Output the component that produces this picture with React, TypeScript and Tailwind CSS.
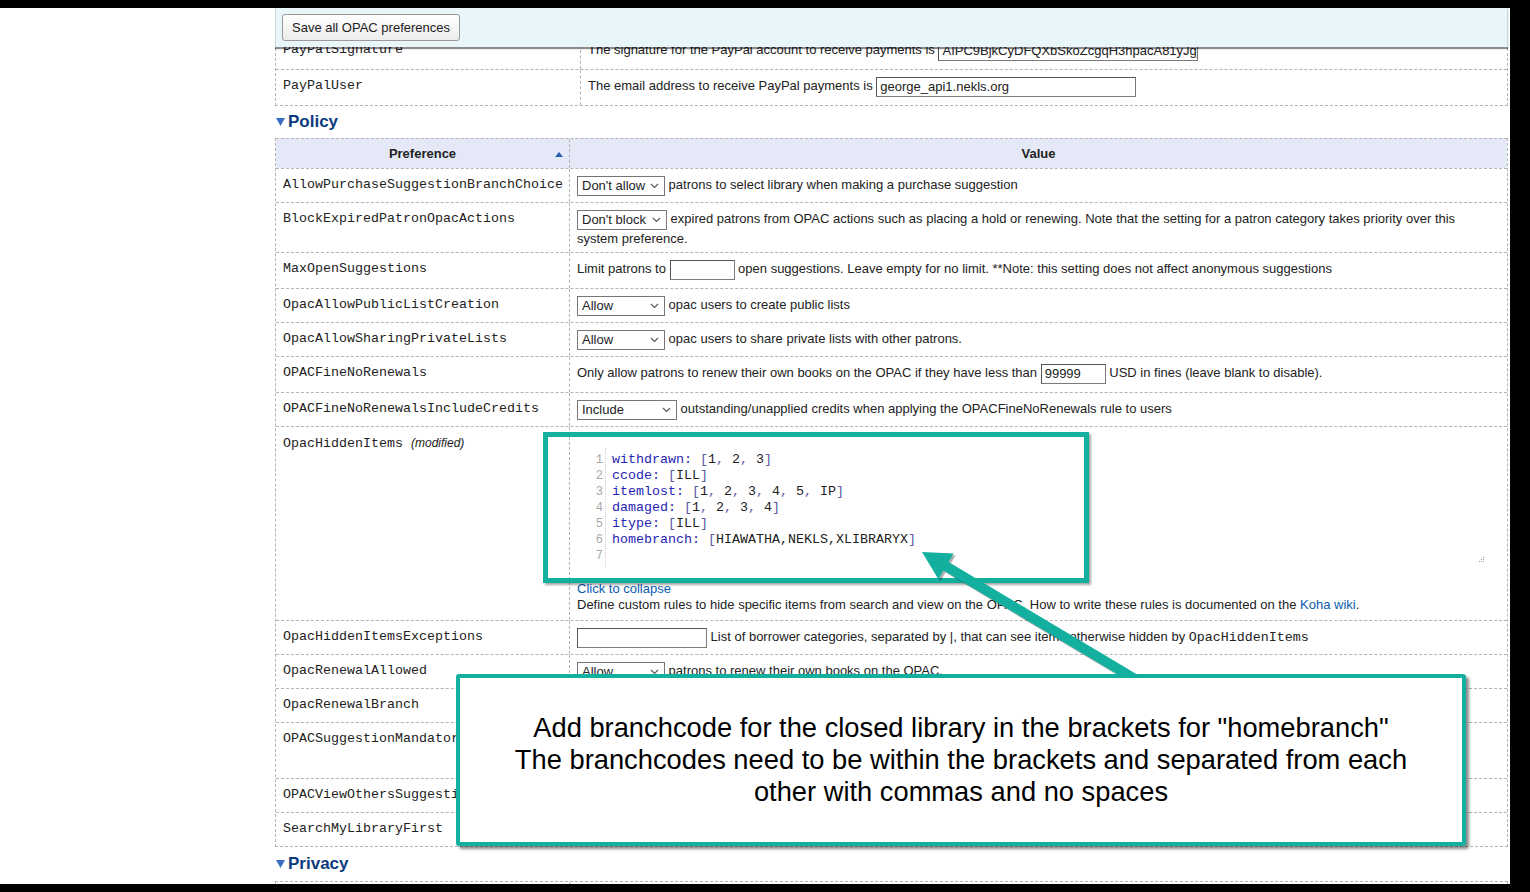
import React from 'react';

const mono = "font-['Liberation_Mono','Courier_New',monospace]";
const line = 'border-dashed border-[#b4b4b4]';

function Chevron() {
    return (
        <svg width="9" height="6" viewBox="0 0 9 6" className="shrink-0">
            <path d="M1 1l3.5 3.5L8 1" fill="none" stroke="#555" strokeWidth="1.1" />
        </svg>
    );
}

function Select({ label, w }: { label: string; w: string }) {
    return (
        <span className={`inline-flex items-center justify-between h-[20px] ${w} border border-[#767676] bg-white pl-[4px] pr-[5px] pb-[1px] align-middle text-[13px] leading-none`}>
            {label}
            <Chevron />
        </span>
    );
}

function Input({ value, w }: { value?: string; w: string }) {
    return (
        <span className={`inline-flex items-center h-[20px] ${w} border border-[#7a7a7a] border-t-[#555] border-l-[#555] bg-white px-[3px] pb-[1px] align-middle text-[13px] leading-none overflow-hidden whitespace-nowrap`}>
            {value}
        </span>
    );
}

interface RowProps {
    name: React.ReactNode;
    h: string;
    col: string;
    children?: React.ReactNode;
}

const Row: React.FC<RowProps> = ({ name, h, col, children }) => (
    <div className={`flex border-t ${line} ${h}`}>
        <div className={`${col} shrink-0 border-r ${line} pl-[7px] pt-[8px] ${mono} text-[13.33px] leading-[16px] text-[#222] whitespace-nowrap`}>
            {name}
        </div>
        <div className="flex-1 pl-[7px] pr-[8px] pt-[7px] text-[13px] leading-[18px] text-[#222]">
            {children}
        </div>
    </div>
);

function Heading({ title, h }: { title: string; h: string }) {
    return (
        <div className={`flex items-center gap-[3px] pl-[1px] ${h}`}>
            <svg width="9" height="8" viewBox="0 0 9 8">
                <path d="M0 0h9L4.5 8z" fill="#3b6fc4" />
            </svg>
            <span className="text-[17px] font-bold text-[#0b3b7e]">{title}</span>
        </div>
    );
}

const codeLines: [string, string[]][] = [
    ['withdrawn', ['1', '2', '3']],
    ['ccode', ['ILL']],
    ['itemlost', ['1', '2', '3', '4', '5', 'IP']],
    ['damaged', ['1', '2', '3', '4']],
    ['itype', ['ILL']],
];

function CodeEditor() {
    return (
        <div className={`relative mt-[13px] flex h-[119px] w-[912px] ${mono} text-[13.33px] leading-[16px]`}>
            <div className="w-[29px] shrink-0 border-r border-dotted border-[#d0d0d0] pt-[4px] pr-[2px] text-right text-[12px] text-[#a8a8a8]">
                {[1, 2, 3, 4, 5, 6, 7].map(n => (
                    <div key={n} className="h-[16px]">{n}</div>
                ))}
            </div>
            <div className="pl-[6px] pt-[4px]">
                {codeLines.map(([key, vals]) => (
                    <div key={key} className="h-[16px] whitespace-pre">
                        <span className="text-[#2424b4]">{key}:</span>{' '}
                        <span className="text-[#5a5a9e]">[</span>
                        {vals.map((v, i) => (
                            <React.Fragment key={i}>
                                <span className="text-[#222]">{v}</span>
                                {i < vals.length - 1 && <span className="text-[#5a5a9e]">, </span>}
                            </React.Fragment>
                        ))}
                        <span className="text-[#5a5a9e]">]</span>
                    </div>
                ))}
                <div className="h-[16px] whitespace-pre">
                    <span className="text-[#2424b4]">homebranch:</span>{' '}
                    <span className="text-[#5a5a9e]">[</span>
                    <span className="text-[#222]">HIAWATHA,NEKLS,XLIBRARYX</span>
                    <span className="text-[#5a5a9e]">]</span>
                </div>
                <div className="h-[16px]" />
            </div>
            <svg className="absolute right-[4px] bottom-[4px]" width="7" height="7" viewBox="0 0 7 7">
                <g fill="#9a9a9a">
                    <rect x="5" y="1" width="1" height="1" />
                    <rect x="3" y="3" width="1" height="1" />
                    <rect x="5" y="3" width="1" height="1" />
                    <rect x="1" y="5" width="1" height="1" />
                    <rect x="3" y="5" width="1" height="1" />
                    <rect x="5" y="5" width="1" height="1" />
                </g>
            </svg>
        </div>
    );
}

export default function App() {
    const c1 = 'w-[305px]';
    const c2 = 'w-[294px]';
    return (
        <div className="relative w-[1530px] h-[892px] overflow-hidden bg-white font-['Liberation_Sans',Arial,sans-serif]">
            <div className="h-[8px] bg-black" />
            <div className="flex h-[876px]">
                <div className="w-[275px] shrink-0 bg-white" />
                <div className="relative w-[1235px] shrink-0 overflow-hidden">
                    {/* sticky save toolbar */}
                    <div className="absolute left-0 top-0 z-10 h-[39px] w-[1233px] border-l border-r border-[#c8d8e0] bg-[#e8f5f9] pl-[6px] pt-[6px] shadow-[0_2px_1px_rgba(0,0,0,0.45)]">
                        <button className="h-[27px] w-[178px] rounded-[3px] border border-[#9a9a9a] bg-gradient-to-b from-white to-[#ececec] text-[13px] text-[#222]">
                            Save all OPAC preferences
                        </button>
                    </div>

                    <div className="mt-[25px] w-[1233px]">
                        <div className={`border-l border-r border-b ${line}`}>
                            <Row name="PayPalSignature" h="h-[36px]" col={c1}>
                                The signature for the PayPal account to receive payments is{' '}
                                <Input value="AIPC9BjkCyDFQXbSkoZcgqH3hpacA81yJgj" w="w-[260px]" />
                            </Row>
                            <Row name="PayPalUser" h="h-[36px]" col={c1}>
                                The email address to receive PayPal payments is{' '}
                                <Input value="george_api1.nekls.org" w="w-[260px]" />
                            </Row>
                        </div>

                        <Heading title="Policy" h="h-[32px]" />

                        <div className={`border-l border-r border-b ${line}`}>
                            <div className={`flex h-[30px] border-t ${line} bg-[#e5e9f7] text-[13px] font-bold text-[#222]`}>
                                <div className={`relative ${c2} shrink-0 flex items-center justify-center border-r ${line}`}>
                                    Preference
                                    <svg className="absolute right-[6px] top-[13px]" width="8" height="5" viewBox="0 0 8 5">
                                        <path d="M0 5L4 0l4 5z" fill="#2a5db0" />
                                    </svg>
                                </div>
                                <div className="flex-1 flex items-center justify-center">Value</div>
                            </div>
                            <Row name="AllowPurchaseSuggestionBranchChoice" h="h-[34px]" col={c2}>
                                <Select label="Don't allow" w="w-[88px]" /> patrons to select library when making a purchase suggestion
                            </Row>
                            <Row name="BlockExpiredPatronOpacActions" h="h-[50px]" col={c2}>
                                <Select label="Don't block" w="w-[90px]" /> expired patrons from OPAC actions such as placing a hold or renewing. Note that the setting for a patron category takes priority over this system preference.
                            </Row>
                            <Row name="MaxOpenSuggestions" h="h-[36px]" col={c2}>
                                Limit patrons to <Input w="w-[65px]" /> open suggestions. Leave empty for no limit. **Note: this setting does not affect anonymous suggestions
                            </Row>
                            <Row name="OpacAllowPublicListCreation" h="h-[34px]" col={c2}>
                                <Select label="Allow" w="w-[88px]" /> opac users to create public lists
                            </Row>
                            <Row name="OpacAllowSharingPrivateLists" h="h-[34px]" col={c2}>
                                <Select label="Allow" w="w-[88px]" /> opac users to share private lists with other patrons.
                            </Row>
                            <Row name="OPACFineNoRenewals" h="h-[36px]" col={c2}>
                                Only allow patrons to renew their own books on the OPAC if they have less than <Input value="99999" w="w-[65px]" /> USD in fines (leave blank to disable).
                            </Row>
                            <Row name="OPACFineNoRenewalsIncludeCredits" h="h-[34px]" col={c2}>
                                <Select label="Include" w="w-[100px]" /> outstanding/unapplied credits when applying the OPACFineNoRenewals rule to users
                            </Row>
                            <Row
                                name={
                                    <>
                                        OpacHiddenItems{' '}
                                        <span className="font-['Liberation_Sans',Arial,sans-serif] text-[12px] italic">(modified)</span>
                                    </>
                                }
                                h="h-[194px]"
                                col={c2}
                            >
                                <div className="-mt-[7px] pt-[8px]">
                                    <CodeEditor />
                                    <div className="mt-[14px] h-[16px] leading-[16px] text-[#0b5cad]">Click to collapse</div>
                                    <div className="h-[16px] leading-[16px]">
                                        Define custom rules to hide specific items from search and view on the OPAC. How to write these rules is documented on the{' '}
                                        <span className="text-[#0b5cad]">Koha wiki</span>.
                                    </div>
                                </div>
                            </Row>
                            <Row name="OpacHiddenItemsExceptions" h="h-[34px]" col={c2}>
                                <Input w="w-[130px]" /> List of borrower categories, separated by |, that can see items otherwise hidden by{' '}
                                <span className={`${mono} text-[13.33px]`}>OpacHiddenItems</span>
                            </Row>
                            <Row name="OpacRenewalAllowed" h="h-[34px]" col={c2}>
                                <Select label="Allow" w="w-[88px]" /> patrons to renew their own books on the OPAC.
                            </Row>
                            <Row name="OpacRenewalBranch" h="h-[34px]" col={c2}>
                                Use <Select label="the library the item was checked out from" w="w-[270px]" /> as branchcode to store in the statistics table.
                            </Row>
                            <Row name="OPACSuggestionMandatoryFields" h="h-[56px]" col={c2}>
                                Fields that should be mandatory for patron purchase suggestions:
                                <div>Title, Author</div>
                            </Row>
                            <Row name="OPACViewOthersSuggestions" h="h-[34px]" col={c2}>
                                <Select label="Show" w="w-[88px]" /> purchase suggestions from other patrons on the OPAC.
                            </Row>
                            <Row name="SearchMyLibraryFirst" h="h-[34px]" col={c2}>
                                <Select label="Don't" w="w-[88px]" /> limit patrons' searches to their home library.
                            </Row>
                        </div>

                        <Heading title="Privacy" h="h-[34px]" />

                        <div className={`h-[40px] border-l border-r border-t ${line} flex`}>
                            <div className={`${c2} border-r ${line}`} />
                        </div>
                    </div>
                </div>
                <div className="flex-1 bg-black" />
            </div>
            <div className="h-[8px] bg-black" />

            {/* annotation: highlight box */}
            <div className="absolute left-[543px] top-[432px] h-[151px] w-[546px] border-[5px] border-[#13b0a0] shadow-[2px_2px_2px_rgba(0,0,0,0.35)]" />

            {/* annotation: arrow */}
            <svg className="absolute left-[900px] top-[540px]" width="250" height="150" viewBox="0 0 250 150">
                <polygon
                    points="24,14 55.7,15.5 50.6,24 239.6,136.7 234.4,145.3 45.5,32.6 40.4,41.2"
                    fill="#000"
                    opacity="0.3"
                />
                <polygon
                    points="22,12 53.7,13.5 48.6,22 237.6,134.7 232.4,143.3 43.5,30.6 38.4,39.2"
                    fill="#13b0a0"
                />
            </svg>

            {/* annotation: callout */}
            <div className="absolute left-[456px] top-[674px] flex h-[172px] w-[1010px] items-center justify-center rounded-[3px] border-[4px] border-[#13b0a0] bg-white shadow-[3px_3px_3px_rgba(0,0,0,0.45)]">
                <p className="text-center text-[27.3px] leading-[32px] text-black">
                    Add branchcode for the closed library in the brackets for "homebranch"
                    <br />
                    The branchcodes need to be within the brackets and separated from each
                    <br />
                    other with commas and no spaces
                </p>
            </div>
        </div>
    );
}
